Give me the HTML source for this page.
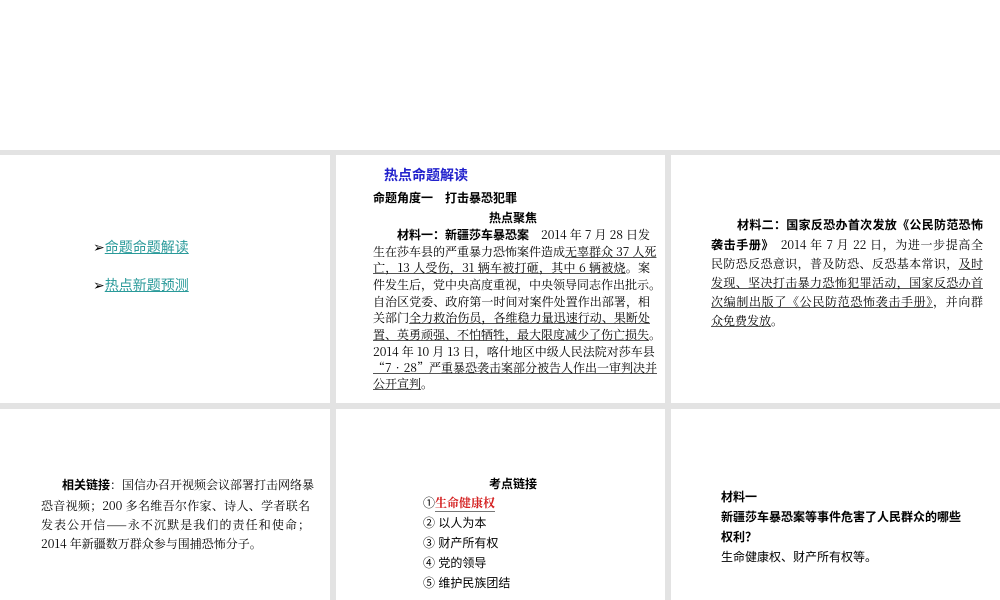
<!DOCTYPE html><html><head><meta charset="utf-8"><style>
body{margin:0;width:1000px;height:600px;background:#fff;position:relative;overflow:hidden;font-family:"Liberation Sans","Noto Sans CJK SC",sans-serif;color:#000}
.bg{position:absolute;left:0;top:150px;width:1000px;height:450px;background:#e3e3e3}
.p{position:absolute;background:#fff}
.l{position:absolute;font-size:12px;line-height:14px;white-space:nowrap;text-align:justify;text-align-last:justify;font-family:"Noto Serif CJK SC","Noto Sans CJK SC",serif}
.b{font-weight:bold;font-family:"Liberation Sans","Noto Sans CJK SC",sans-serif}
u{text-decoration-color:#555}
</style></head><body>
<div class="bg"></div>
<div class="p" style="left:0;top:155px;width:330px;height:248px"></div>
<div class="p" style="left:336px;top:155px;width:329px;height:248px"></div>
<div class="p" style="left:671px;top:155px;width:329px;height:248px"></div>
<div class="p" style="left:0;top:409px;width:330px;height:191px"></div>
<div class="p" style="left:336px;top:409px;width:329px;height:191px"></div>
<div class="p" style="left:671px;top:409px;width:329px;height:191px"></div>

<div style="position:absolute;left:93px;top:237px;font-size:14px;color:#2a9a9a"><span style="color:#000">➢</span><u style="text-decoration-color:#2a9a9a">命题命题解读</u></div>
<div style="position:absolute;left:93px;top:275px;font-size:14px;color:#2a9a9a"><span style="color:#000">➢</span><u style="text-decoration-color:#2a9a9a">热点新题预测</u></div>

<div style="position:absolute;left:384px;top:165px;font-size:14px;font-weight:bold;color:#2222cc">热点命题解读</div>
<div class="b" style="position:absolute;left:373px;top:189px;font-size:12px">命题角度一　打击暴恐犯罪</div>
<div class="b" style="position:absolute;left:489px;top:209px;font-size:12px">热点聚焦</div>
<div class="l" style="left:397px;top:228px;width:253px"><span class="b">材料一：新疆莎车暴恐案</span>　2014 年 7 月 28 日发</div>
<div class="l" style="left:373px;top:245px;width:277px">生在莎车县的严重暴力恐怖案件造成<u>无辜群众 37 人死</u></div>
<div class="l" style="left:373px;top:261px;width:277px"><u>亡，13 人受伤，31 辆车被打砸，其中 6 辆被烧</u>。案</div>
<div class="l" style="left:373px;top:278px;width:277px">件发生后，党中央高度重视，中央领导同志作出批示。</div>
<div class="l" style="left:373px;top:295px;width:277px">自治区党委、政府第一时间对案件处置作出部署，相</div>
<div class="l" style="left:373px;top:311px;width:277px">关部门<u>全力救治伤员，各维稳力量迅速行动、果断处</u></div>
<div class="l" style="left:373px;top:328px;width:277px"><u>置、英勇顽强、不怕牺牲，最大限度减少了伤亡损失</u>。</div>
<div class="l" style="left:373px;top:345px;width:277px">2014 年 10 月 13 日，喀什地区中级人民法院对莎车县</div>
<div class="l" style="left:373px;top:361px;width:277px"><u>“7•28”严重暴恐袭击案部分被告人作出一审判决并</u></div>
<div class="l" style="left:373px;top:377px;text-align-last:auto"><u>公开宣判</u>。</div>

<div class="l" style="left:737px;top:218px;width:246px"><span class="b">材料二：国家反恐办首次发放《公民防范恐怖</span></div>
<div class="l" style="left:711px;top:238px;width:272px"><span class="b">袭击手册》</span>　2014 年 7 月 22 日，为进一步提高全</div>
<div class="l" style="left:711px;top:257px;width:272px">民防恐反恐意识，普及防恐、反恐基本常识，<u>及时</u></div>
<div class="l" style="left:711px;top:276px;width:272px"><u>发现、坚决打击暴力恐怖犯罪活动，国家反恐办首</u></div>
<div class="l" style="left:711px;top:295px;width:272px"><u>次编制出版了《公民防范恐怖袭击手册》</u>，并向群</div>
<div class="l" style="left:711px;top:314px;text-align-last:auto"><u>众免费发放</u>。</div>

<div class="l" style="left:62px;top:478px;width:248px"><span class="b">相关链接</span>：国信办召开视频会议部署打击网络暴</div>
<div class="l" style="left:41px;top:499px;width:269px">恐音视频；200 多名维吾尔作家、诗人、学者联名</div>
<div class="l" style="left:41px;top:518px;width:269px">发表公开信——永不沉默是我们的责任和使命；</div>
<div class="l" style="left:41px;top:537px;text-align-last:auto">2014 年新疆数万群众参与围捕恐怖分子。</div>

<div class="b" style="position:absolute;left:489px;top:475px;font-size:12px">考点链接</div>
<div style="position:absolute;left:423px;top:493px;font-size:12px;line-height:20px">①<span style="color:#d42020;font-weight:bold;border-bottom:1px solid #777;font-family:'Noto Serif CJK SC',serif">生命健康权</span><br>② 以人为本<br>③ 财产所有权<br>④ 党的领导<br>⑤ 维护民族团结</div>

<div class="b" style="position:absolute;left:721px;top:487px;font-size:12px;line-height:20px">材料一<br>新疆莎车暴恐案等事件危害了人民群众的哪些<br>权利？<br><span style="font-weight:normal">生命健康权、财产所有权等。</span></div>
</body></html>
